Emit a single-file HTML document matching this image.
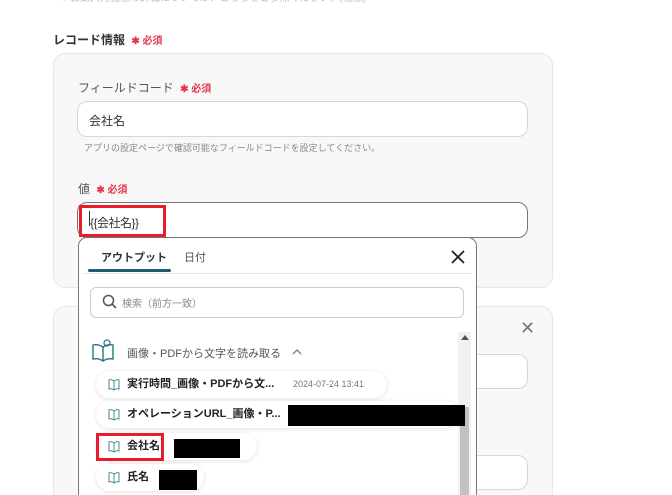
<!DOCTYPE html>
<html><head><meta charset="utf-8"><style>
*{box-sizing:border-box;margin:0;padding:0}
html,body{width:672px;height:495px;overflow:hidden}
body{background:#fff;font-family:"Liberation Sans","Noto Sans CJK JP",sans-serif;position:relative;color:#333}
.a{position:absolute}
.req{color:#e5344b;font-weight:bold;font-size:10px}
.panel{background:#f8f8f9;border:1px solid #e6e7ea;border-radius:12px}
.inp{background:#fff;border:1px solid #d3d7de;border-radius:10px}
.pill{background:#fff;border-radius:14px;box-shadow:0 1px 5px rgba(0,0,0,.12);height:27px;font-size:11px;font-weight:bold;color:#222;line-height:27px;padding-left:31px;white-space:nowrap}
.blk{background:#000}
</style></head><body>
<div class="a" style="left:60px;top:-11px;font-size:10px;color:#bbb">※自動入力機能の詳細については、こちらをご参照ください。(任意)</div>
<div class="a" style="left:53px;top:31px;font-size:12px;font-weight:bold;color:#333">レコード情報 <span class="req" style="margin-left:3px">✱ 必須</span></div>
<div class="a panel" style="left:53px;top:53px;width:500px;height:235px"></div>
<div class="a" style="left:78px;top:79px;font-size:12px;color:#555">フィールドコード <span class="req" style="margin-left:3px">✱ 必須</span></div>
<div class="a inp" style="left:77px;top:101px;width:451px;height:36px;font-size:12px;padding:10px 11px;color:#333">会社名</div>
<div class="a" style="left:84px;top:141px;font-size:9px;color:#888">アプリの設定ページで確認可能なフィールドコードを設定してください。</div>
<div class="a" style="left:78px;top:180px;font-size:12px;color:#555">値 <span class="req" style="margin-left:3px">✱ 必須</span></div>
<div class="a inp" style="left:77px;top:202px;width:451px;height:36px;border-color:#777"></div>
<div class="a" style="left:79px;top:205px;width:87px;height:32px;border:3px solid #e81c2a;background:#fff;font-size:12px;padding:6px 0 0 8px;color:#333;letter-spacing:-0.5px">{{会社名}}</div>
<div class="a" style="left:89px;top:211px;width:1px;height:15px;background:#333"></div>
<div class="a panel" style="left:53px;top:306px;width:500px;height:200px"></div>
<div class="a" style="left:520px;top:318px;font-size:18px;color:#777">✕</div>
<div class="a inp" style="left:460px;top:354px;width:68px;height:35px"></div>
<div class="a inp" style="left:460px;top:455px;width:68px;height:35px"></div>
<div class="a" style="left:78px;top:237px;width:399px;height:270px;background:#fff;border:1px solid #777;border-radius:9px 9px 0 0"></div>
<div class="a" style="left:101px;top:249px;font-size:11px;font-weight:bold;color:#333">アウトプット</div>
<div class="a" style="left:184px;top:249px;font-size:11px;color:#555">日付</div>
<div class="a" style="left:88px;top:269px;width:83px;height:3px;background:#1b5e72;border-radius:2px"></div>
<div class="a" style="left:83px;top:273px;width:388px;height:1px;background:#e3e3e3"></div>
<svg class="a" style="left:451px;top:250px" width="14" height="14"><path d="M1 1L13 13M13 1L1 13" stroke="#222" stroke-width="1.8"/></svg>
<div class="a" style="left:90px;top:287px;width:374px;height:31px;border:1px solid #c9ccd1;border-radius:6px"></div>
<svg class="a" style="left:102px;top:294px" width="16" height="16"><circle cx="6.5" cy="6.5" r="5" fill="none" stroke="#555" stroke-width="1.5"/><path d="M10 10L14 14" stroke="#555" stroke-width="1.6"/></svg>
<div class="a" style="left:122px;top:295px;font-size:10px;color:#888">検索（前方一致）</div>
<div class="a" style="left:458px;top:332px;width:13px;height:170px;background:#f1f1f1"></div>
<div class="a" style="left:460px;top:407px;width:9px;height:90px;background:#c1c1c1"></div>
<div class="a" style="left:461px;top:335px;width:0;height:0;border-left:4px solid transparent;border-right:4px solid transparent;border-bottom:5px solid #555"></div>
<svg class="a" style="left:91px;top:338px" width="24" height="25"><path d="M2 7v14c4-1 7 0 10 2c3-2 6-3 10-2V7c-4-1-7 0-10 2C9 7 6 6 2 7z M12 9v14" fill="none" stroke="#2a6f80" stroke-width="1.4"/><circle cx="16" cy="5" r="3" fill="none" stroke="#2a6f80" stroke-width="1.2"/></svg>
<div class="a" style="left:127px;top:345px;font-size:11px;color:#555">画像・PDFから文字を読み取る</div>
<svg class="a" style="left:292px;top:348px" width="10" height="7"><path d="M1 6L5 2L9 6" fill="none" stroke="#888" stroke-width="1.5"/></svg>
<div class="a pill" style="left:96px;top:371px;width:291px">実行時間_画像・PDFから文...<span style="font-weight:normal;font-size:9px;color:#777;position:absolute;left:197px">2024-07-24 13:41</span></div>
<div class="a pill" style="left:96px;top:401px;width:362px">オペレーションURL_画像・P...</div>
<div class="a pill" style="left:96px;top:433px;width:161px">会社名</div>
<div class="a pill" style="left:96px;top:464px;width:108px">氏名</div>
<svg class="a" style="left:108px;top:377px" width="12" height="14"><path d="M1 3v9c2-1 3 0 5 1c2-1 3-2 5-1V3c-2-1-3 0-5 1C4 3 3 2 1 3zM6 4v9" fill="none" stroke="#4a8a9a" stroke-width="1"/></svg>
<svg class="a" style="left:108px;top:407px" width="12" height="14"><path d="M1 3v9c2-1 3 0 5 1c2-1 3-2 5-1V3c-2-1-3 0-5 1C4 3 3 2 1 3zM6 4v9" fill="none" stroke="#4a8a9a" stroke-width="1"/></svg>
<svg class="a" style="left:108px;top:439px" width="12" height="14"><path d="M1 3v9c2-1 3 0 5 1c2-1 3-2 5-1V3c-2-1-3 0-5 1C4 3 3 2 1 3zM6 4v9" fill="none" stroke="#4a8a9a" stroke-width="1"/></svg>
<svg class="a" style="left:108px;top:470px" width="12" height="14"><path d="M1 3v9c2-1 3 0 5 1c2-1 3-2 5-1V3c-2-1-3 0-5 1C4 3 3 2 1 3zM6 4v9" fill="none" stroke="#4a8a9a" stroke-width="1"/></svg>
<div class="a blk" style="left:288px;top:405px;width:177px;height:21px"></div>
<div class="a blk" style="left:174px;top:439px;width:66px;height:19px"></div>
<div class="a blk" style="left:159px;top:470px;width:38px;height:20px"></div>
<div class="a" style="left:96px;top:433px;width:68px;height:28px;border:3px solid #e81c2a"></div>
</body></html>
